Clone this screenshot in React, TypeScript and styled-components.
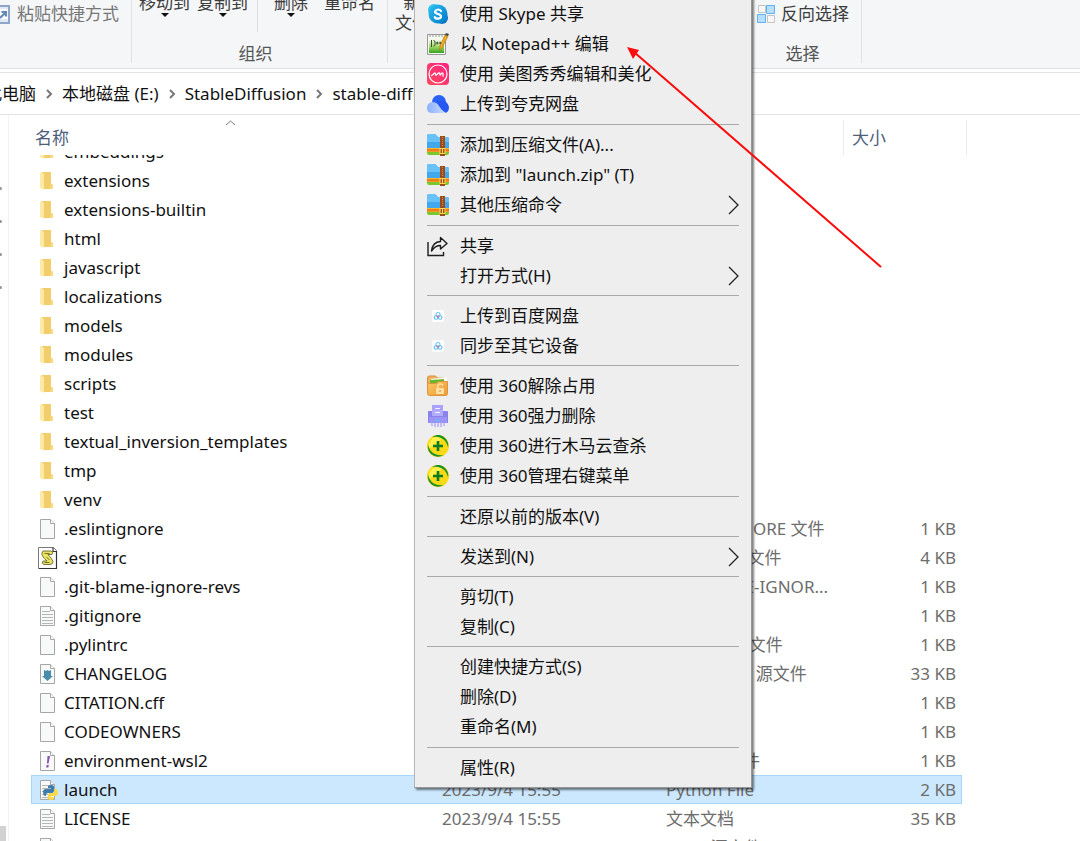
import React from "react";
import styled, { createGlobalStyle, css } from "styled-components";

const GlobalStyle = createGlobalStyle`
  * { box-sizing: border-box; }
  body {
    margin: 0;
    background: #fff;
    color: #111;
    font-family: "Noto Sans", "Noto Sans CJK SC", sans-serif;
    font-size: 17px;
    line-height: 20px;
  }
  button {
    margin: 0;
    padding: 0;
    border: 0;
    background: none;
    color: inherit;
    font: inherit;
    white-space: nowrap;
  }
`;

const Window = styled.div`
  position: relative;
  display: flex;
  flex-direction: column;
  height: 100vh;
  overflow: hidden;
`;

/* ---------- ribbon ---------- */

const Ribbon = styled.header`
  display: flex;
  flex: none;
  height: 69px;
  overflow: hidden;
  background: #f4f6f8;
  border-bottom: 1px solid #dfe1e3;
`;

const RibbonGroup = styled.section<{ $width?: number }>`
  display: flex;
  flex-direction: column;
  flex: none;
  height: 63px;
  ${(p) => p.$width && css`width: ${p.$width}px;`}
  border-right: 1px solid #e0e2e4;
  color: #3c3c3c;
`;

const Commands = styled.div<{ $tall?: boolean }>`
  display: flex;
  flex: none;
  align-items: flex-start;
  height: ${(p) => (p.$tall ? 51 : 40)}px;
  margin-top: ${(p) => (p.$tall ? -7 : 4)}px;
`;

const GroupLabel = styled.div`
  padding-right: 8px;
  text-align: center;
  color: #555;
`;

const TallButton = styled.button`
  display: flex;
  flex-direction: column;
  align-items: center;
  margin-left: 7px;
`;

const WideGapButton = styled(TallButton)`
  margin-left: 16px;
`;

const CommandDivider = styled.span`
  width: 1px;
  height: 39px;
  margin-left: 9px;
  background: #dcdee0;
`;

const RowButton = styled.button`
  display: flex;
  align-items: center;
  gap: 6px;
  height: 20px;
  padding: 0 12px 0 5px;
  &:disabled { color: #777; padding: 0; margin-left: -7px; }
`;

const Caret = () => (
  <svg width="8" height="4" viewBox="0 0 8 4" aria-hidden="true">
    <path d="M0 0h8L4 4z" fill="#111" />
  </svg>
);

/* ---------- address bar ---------- */

const AddressBar = styled.nav`
  display: flex;
  align-items: center;
  flex: none;
  height: 43px;
  margin-top: 3px;
  border-top: 1px solid #e3e3e3;
  border-bottom: 1px solid #e3e3e3;
  overflow: hidden;
`;

const Crumb = styled.button`
  flex: none;
  &:first-child { margin-left: -15px; }
`;

const CrumbArrow = styled.svg`
  flex: none;
  width: 26px;
  height: 12px;
`;

/* ---------- body ---------- */

const Body = styled.div`
  display: flex;
  flex: 1;
  min-height: 0;
`;

const NavPane = styled.aside`
  display: flex;
  flex-direction: column;
  flex: none;
  width: 9px;
  margin-right: 22px;
  padding-top: 72px;
  border-right: 1px solid #f3f3f3;
`;

const PinMark = styled.i`
  width: 2px;
  height: 3px;
  margin-bottom: 30px;
  border-radius: 0 2px 2px 0;
  background: #8f98a3;
`;

const ScrollThumb = styled.div`
  width: 6px;
  height: 15px;
  margin-top: auto;
  background: #d2d2d2;
`;

const FileTable = styled.table`
  flex: none;
  width: 936px;
  height: min-content;
  table-layout: fixed;
  border-collapse: separate;
  border-spacing: 0;
`;

const HeadCell = styled.th`
  position: relative;
  height: 40px;
  padding: 6px 0 0 4px;
  text-align: left;
  font-weight: 400;
  color: #4d607a;
  background: linear-gradient(#ebebeb, #ebebeb) right bottom / 1px 35px no-repeat;
`;

const NameHead = styled(HeadCell)`
  background: none;
`;

const SizeHead = styled(HeadCell)`
  padding-left: 8px;
  background: none;
`;

const SortMark = styled.svg`
  position: absolute;
  top: 5px;
  left: 194px;
`;

const Row = styled.tr<{ $selected?: boolean }>`
  td {
    height: 29px;
    padding: 0 0 0 7px;
    white-space: nowrap;
    color: #6d6d6d;
    ${(p) =>
      p.$selected &&
      css`
        background: #cce8ff;
        border: solid #a6d6fb;
        border-width: 1px 0;
      `}
  }
  td:first-child {
    color: #111;
    ${(p) => p.$selected && css`border-left-width: 1px;`}
    padding-left: ${(p) => (p.$selected ? 6 : 7)}px;
  }
  td:last-child {
    padding-right: ${(p) => (p.$selected ? 5 : 6)}px;
    text-align: right;
    ${(p) => p.$selected && css`border-right-width: 1px;`}
  }
`;

const CutRow = styled(Row)`
  td { height: 11px; vertical-align: bottom; }
`;

const NameBox = styled.div<{ $cut?: boolean }>`
  display: flex;
  align-items: ${(p) => (p.$cut ? "flex-end" : "center")};
  gap: 6px;
  ${(p) => p.$cut && css`height: 11px; padding-bottom: 4px; overflow: hidden;`}
  svg { flex: none; }
`;

/* ---------- file icons (20 x 24) ---------- */

type IconKind = "folder" | "blank" | "text" | "script" | "markdown" | "yaml" | "python";

const Page = ({ lined }: { lined?: boolean }) => (
  <>
    <path d="M2.500 2.500h10l4 4v15h-14z" fill="#f8f9f9" stroke="#a6a6a6" />
    <path d="M12.500 2.500v4h4" fill="#fff" stroke="#a6a6a6" />
    {lined && <path d="M4 7.500h8M4 10.500h11M4 13.500h11M4 16.500h11M4 19.500h11" stroke="#b5b5b5" />}
  </>
);

const FileIcon = ({ kind }: { kind: IconKind }) => (
  <svg width="20" height="24" viewBox="0 0 20 24" aria-hidden="true">
    {kind === "folder" && (
      <>
        <path d="M4 3h9v12l2 1v4H5z" fill="#f2cd6b" />
        <path d="M13 15h1l1 1v4h-3z" fill="#f8d97f" />
        <path d="M2 3l4 2v16l-4-2z" fill="#ffe9a6" />
      </>
    )}
    {kind === "blank" && <Page />}
    {kind === "text" && <Page lined />}
    {kind === "script" && (
      <>
        <path d="M.500 1.500h15l3 3v18H.500z" fill="#fff" stroke="#7a7a7a" />
        <path d="M15 1.500v4h4M18.500 5v17.500H1" fill="none" stroke="#333" strokeWidth="1.200" />
        <path d="M5 5h8q3 1 1 3.500h-4q4 4 5 7 0 3-3 3H6q-3-1-1-3.500h4Q3 10 4 7z" fill="#ebe45e" stroke="#55552a" strokeWidth=".8" />
        <path d="M6.500 7.500h5M8.500 11l3 3M6.500 16.500h5" stroke="#55552a" strokeWidth=".8" />
      </>
    )}
    {kind === "markdown" && (
      <>
        <Page />
        <path d="M6 8l2 1 1.500-1L11 9l2-1v6h2l-5.500 5L4 14h2z" fill="#4a8cab" />
      </>
    )}
    {kind === "yaml" && (
      <>
        <Page />
        <path d="M9.500 7h2.500l-1.500 7.500H9zM8.600 16h2.200l-.4 2.400H8.200z" fill="#8a4fb0" />
      </>
    )}
    {kind === "python" && (
      <>
        <Page lined />
        <path d="M10 8q3-2 6 0v5q0 2-2 2h-4q-2 0-2 2v1H7q-2-1-2-4 0-3 3-3h5v-1h-3z" fill="#3b7dae" />
        <path d="M16 11h2q2 1 2 4t-3 3h-4v1h3v2q-3 2-6 0v-4q0-2 2-2h3q1 0 1-2z" fill="#fdd849" />
      </>
    )}
  </svg>
);

interface FileEntry {
  name: string;
  kind: IconKind;
  type?: string;
  size?: string;
}

const DATE = "2023/9/4 15:55";

const folders = [
  "embeddings", "extensions", "extensions-builtin", "html", "javascript", "localizations", "models",
  "modules", "scripts", "test", "textual_inversion_templates", "tmp", "venv",
];

const files: FileEntry[] = [
  ...folders.map((name): FileEntry => ({ name, kind: "folder", type: "文件夹" })),
  { name: ".eslintignore", kind: "blank", type: "ESLINTIGNORE 文件", size: "1 KB" },
  { name: ".eslintrc", kind: "script", type: "ESLINTRC 文件", size: "4 KB" },
  { name: ".git-blame-ignore-revs", kind: "blank", type: "GIT-BLAME-IGNOR...", size: "1 KB" },
  { name: ".gitignore", kind: "text", type: "文本文档", size: "1 KB" },
  { name: ".pylintrc", kind: "blank", type: "PYLINTRC 文件", size: "1 KB" },
  { name: "CHANGELOG", kind: "markdown", type: "Markdown 源文件", size: "33 KB" },
  { name: "CITATION.cff", kind: "blank", type: "CFF 文件", size: "1 KB" },
  { name: "CODEOWNERS", kind: "blank", type: "文件", size: "1 KB" },
  { name: "environment-wsl2", kind: "yaml", type: "Yaml 源文件", size: "1 KB" },
  { name: "launch", kind: "python", type: "Python File", size: "2 KB" },
  { name: "LICENSE", kind: "text", type: "文本文档", size: "35 KB" },
  { name: "package", kind: "blank", type: "JSON 源文件", size: "1 KB" },
];

/* ---------- context menu ---------- */

const Menu = styled.div`
  position: absolute;
  top: -7px;
  left: 414px;
  width: 338px;
  padding: 0 12px;
  background: #eee;
  border: 1px solid #b4b4b4;
  border-right-color: #979797;
  border-bottom-color: #979797;
  box-shadow: 2px 2px 2px rgba(0, 0, 0, 0.5);
`;

const MenuGroup = styled.div<{ $long: boolean }>`
  padding: 5px 0 ${(p) => (p.$long ? 5 : 4)}px;
  & + & { border-top: 1px solid #a8a8a8; }
`;

const MenuItem = styled.button`
  display: flex;
  align-items: center;
  width: 100%;
  height: 30px;
  text-align: left;
`;

const MenuIcon = styled.span`
  display: flex;
  flex: none;
  width: 22px;
  margin-right: 11px;
`;

const MenuText = styled.span`
  flex: 1;
`;

const Glyph = ({ children }: { children: React.ReactNode }) => (
  <svg width="22" height="22" viewBox="0 0 22 22" aria-hidden="true">{children}</svg>
);

const SkypeIcon = () => (
  <Glyph>
    <defs>
      <linearGradient id="sky" x1="0" y1="0" x2="1" y2="1">
        <stop offset="0" stopColor="#2cc0f2" />
        <stop offset="1" stopColor="#0078c8" />
      </linearGradient>
    </defs>
    <circle cx="7" cy="7" r="6" fill="#2fc1f0" />
    <circle cx="15" cy="15" r="6" fill="#0a78c4" />
    <circle cx="11" cy="11" r="9.500" fill="url(#sky)" />
    <path d="M14 8Q13 6.500 11 6.500T8 8.500Q8 10.300 11 11t3 2.600q0 2-3 2T7.800 14" fill="none" stroke="#fff" strokeWidth="2.200" strokeLinecap="round" />
  </Glyph>
);

const NotepadIcon = () => (
  <Glyph>
    <defs>
      <linearGradient id="npp" x1="0" y1="0" x2="0" y2="1">
        <stop offset="0.200" stopColor="#f4faee" />
        <stop offset="0.600" stopColor="#a6d96a" />
        <stop offset="1" stopColor="#35a51e" />
      </linearGradient>
    </defs>
    <path d="M.500 1.500h18v20H.500z" fill="#f6f6f6" stroke="#999" />
    <path d="M2 3h15v17H2z" fill="url(#npp)" />
    <path d="M3 2v2M6 2v2M9 2v2M12 2v2M15 2v2" stroke="#999" />
    <path d="M4.500 14V7M6.500 7.500q1.500 0 1.500 1.500v3q0 1-1.500 1M9 10h2.500M10.300 8.800v2.500M12 10h2.500M13.300 8.800v2.500" fill="none" stroke="#3b4a35" />
    <path d="M18 2l3 1-6 12-2.500 2 .500-4z" fill="#f2a91d" stroke="#b07a1c" strokeWidth=".7" />
    <path d="M18 2l1-2 3 1-1 2z" fill="#444" />
  </Glyph>
);

const MeituIcon = () => (
  <Glyph>
    <defs>
      <linearGradient id="mt" x1="1" y1="0" x2="0" y2="1">
        <stop offset="0" stopColor="#ff2184" />
        <stop offset="1" stopColor="#ff4a5c" />
      </linearGradient>
    </defs>
    <rect width="22" height="22" rx="4" fill="url(#mt)" />
    <circle cx="11" cy="11" r="9" fill="none" stroke="#fff" strokeWidth="1.200" />
    <path d="M4.500 12.500Q6 12 7 10.500t1.800 1.200Q9 13 10 11.500t2-1.500q1 0 1 1.700 0 .8 1-.7 1-1.500 1.700-.7T16 13" fill="none" stroke="#fff" strokeWidth="1.300" strokeLinecap="round" />
  </Glyph>
);

const QuarkIcon = () => (
  <Glyph>
    <defs>
      <linearGradient id="qk" x1="0" y1="0" x2="1" y2="0">
        <stop offset="0" stopColor="#8bb0ff" />
        <stop offset="1" stopColor="#cbdcff" />
      </linearGradient>
    </defs>
    <circle cx="12" cy="9" r="7" fill="#2a62f5" />
    <path d="M10 8q10-2 12 6 0 6-5 6h-6z" fill="#2657f2" />
    <path d="M0 15q0-5 5-6 5 0 7 4 2 4 7 7H5q-5 0-5-5z" fill="url(#qk)" />
  </Glyph>
);

const ZipIcon = () => (
  <Glyph>
    <path d="M0 15h22v4q0 2-2 2H2q-2 0-2-2z" fill="#7cc62e" />
    <path d="M0 13h22v5H0z" fill="#f9b72d" />
    <path d="M0 15h22v2.500H0z" fill="#f07d1c" />
    <path d="M0 2q0-2 2-2h6l3 3h9q2 0 2 2v9H0z" fill="#42a8ee" />
    <path d="M0 2q0-2 2-2h6l3 3h9q2 0 2 2v3H0z" fill="#68c2f8" />
    <path d="M13 2h5v20h-5z" fill="#9b4c1c" />
    <path d="M15.500 3v10" stroke="#d98e4b" strokeDasharray="1 1" />
    <rect x="13" y="14.500" width="5" height="5" fill="#a7521c" stroke="#ffd75a" />
    <path d="M15.500 15v4" stroke="#ffd75a" />
  </Glyph>
);

const ShareIcon = () => (
  <Glyph>
    <path d="M1 7v13.500h15.500V17" fill="none" stroke="#1d1d1d" strokeWidth="1.400" />
    <path d="M13.500 2.500l6.500 6-6.500 5.500v-3.500Q8 10.500 4.500 16 5.500 7 13.500 6.500z" fill="none" stroke="#1d1d1d" strokeWidth="1.400" strokeLinejoin="round" />
  </Glyph>
);

const BaiduIcon = () => (
  <Glyph>
    <rect x="5" y="5" width="12" height="12" rx="2" fill="#fdfdfd" />
    <circle cx="11" cy="9.500" r="2" fill="none" stroke="#6cc6f5" strokeWidth="1.100" />
    <circle cx="9" cy="12.500" r="1.800" fill="none" stroke="#62bbf7" strokeWidth="1.100" />
    <circle cx="13.200" cy="12.500" r="1.800" fill="none" stroke="#62bbf7" strokeWidth="1.100" />
    <circle cx="11" cy="11.500" r="1.100" fill="#ee6575" />
  </Glyph>
);

const UnlockIcon = () => (
  <Glyph>
    <defs>
      <linearGradient id="ul" x1="0" y1="0" x2="1" y2="1">
        <stop offset="0" stopColor="#fcc763" />
        <stop offset="1" stopColor="#ee9b33" />
      </linearGradient>
    </defs>
    <path d="M.500 3q0-2 2-2h6l2 2h9v8H.500z" fill="#f2b25a" stroke="#cf8d3e" />
    <path d="M4 4l16-2v7H4z" fill="#fff" />
    <path d="M3 5l14-1v4H3z" fill="#66b82e" />
    <path d="M.500 8.500h9l2-2h9v12q0 2-2 2h-16q-2 0-2-2z" fill="url(#ul)" stroke="#dd9440" />
    <rect x="9" y="13" width="8" height="6" rx="1" fill="#fddfa8" />
    <path d="M11 13v-2q0-2 2.500-2 2 0 2 1.500" fill="none" stroke="#fddfa8" strokeWidth="1.500" />
    <path d="M13 15v2" stroke="#e9a04a" strokeWidth="1.500" />
  </Glyph>
);

const ShredIcon = () => (
  <Glyph>
    <path d="M5 0h11v9H5z" fill="#aaa2fb" />
    <path d="M1 6h4v3h11V6h4q1 0 1 1v11H1z" fill="#8c82ee" />
    <path d="M5 5h11v6H5z" fill="#b3acfc" />
    <path d="M8 3.500h5M8 7.500h5" stroke="#f3f1ff" strokeWidth="1.200" />
    <path d="M2 12h18v6H2z" fill="#9c93f6" />
    <path d="M8.500 15.500h4" stroke="#58c6f3" strokeWidth="1.500" />
    <path d="M5 18v3M8 18v4M11 18v4M14 18v4M17 18v3" stroke="#b3acf8" strokeWidth="1.500" />
  </Glyph>
);

const Shield360Icon = () => (
  <Glyph>
    <circle cx="11" cy="11" r="11" fill="#fbd915" />
    <path d="M2 14q-1-7 4-11 5-3 10 0" fill="#fff04a" />
    <path d="M5 2Q13-3 19 4q3 4 2 8-2-7-7-9-4-2-9-1z" fill="#17922b" />
    <path d="M17 20q-7 4-13-1-4-4-3-9 2 7 7 9 4 2 9 1z" fill="#17922b" />
    <path d="M11 6v10M6 11h10" stroke="#0a7d22" strokeWidth="2.600" />
  </Glyph>
);

const SubmenuArrow = () => (
  <svg width="11" height="20" viewBox="0 0 11 20" aria-hidden="true">
    <path d="M1 1l9 9-9 9" fill="none" stroke="#222" strokeWidth="1.300" />
  </svg>
);

interface Entry {
  label: string;
  icon?: React.ReactNode;
  submenu?: boolean;
}

const menu: Entry[][] = [
  [
    { label: "使用 Skype 共享", icon: <SkypeIcon /> },
    { label: "以 Notepad++ 编辑", icon: <NotepadIcon /> },
    { label: "使用 美图秀秀编辑和美化", icon: <MeituIcon /> },
    { label: "上传到夸克网盘", icon: <QuarkIcon /> },
  ],
  [
    { label: "添加到压缩文件(A)...", icon: <ZipIcon /> },
    { label: '添加到 "launch.zip" (T)', icon: <ZipIcon /> },
    { label: "其他压缩命令", icon: <ZipIcon />, submenu: true },
  ],
  [
    { label: "共享", icon: <ShareIcon /> },
    { label: "打开方式(H)", submenu: true },
  ],
  [
    { label: "上传到百度网盘", icon: <BaiduIcon /> },
    { label: "同步至其它设备", icon: <BaiduIcon /> },
  ],
  [
    { label: "使用 360解除占用", icon: <UnlockIcon /> },
    { label: "使用 360强力删除", icon: <ShredIcon /> },
    { label: "使用 360进行木马云查杀", icon: <Shield360Icon /> },
    { label: "使用 360管理右键菜单", icon: <Shield360Icon /> },
  ],
  [{ label: "还原以前的版本(V)" }],
  [{ label: "发送到(N)", submenu: true }],
  [{ label: "剪切(T)" }, { label: "复制(C)" }],
  [{ label: "创建快捷方式(S)" }, { label: "删除(D)" }, { label: "重命名(M)" }],
  [{ label: "属性(R)" }],
];

/* Red pointer drawn over the window */
const Pointer = styled.svg`
  position: absolute;
  top: 40px;
  left: 620px;
  pointer-events: none;
`;

const crumbs = ["此电脑", "本地磁盘 (E:)", "StableDiffusion", "stable-diffusion-webui"];

export default function App() {
  return (
    <Window>
      <GlobalStyle />
      <Ribbon>
        <RibbonGroup $width={132}>
          <Commands>
            <RowButton disabled>
              <svg width="18" height="20" viewBox="0 0 18 20" aria-hidden="true">
                <path d="M1 2h15v17H1z" fill="#dfe9f5" stroke="#8ea7c8" strokeWidth="2" />
                <path d="M6 5h9v10H6z" fill="#fff" />
                <path d="M7 14l5-5M8.500 8H13v4.500" fill="none" stroke="#6688b4" strokeWidth="2.200" />
              </svg>
              粘贴快捷方式
            </RowButton>
          </Commands>
        </RibbonGroup>
        <RibbonGroup $width={256}>
          <Commands $tall>
            <TallButton>移动到<Caret /></TallButton>
            <TallButton>复制到<Caret /></TallButton>
            <CommandDivider />
            <WideGapButton>删除<Caret /></WideGapButton>
            <WideGapButton>重命名</WideGapButton>
          </Commands>
          <GroupLabel>组织</GroupLabel>
        </RibbonGroup>
        <RibbonGroup $width={364}>
          <Commands $tall>
            <TallButton><span>新建</span><span>文件夹</span></TallButton>
          </Commands>
        </RibbonGroup>
        <RibbonGroup>
          <Commands>
            <RowButton>
              <svg width="18" height="18" viewBox="0 0 18 18" aria-hidden="true">
                <path d="M1.500.500h7v7h-7zM10.500 10.500h7v7h-7z" fill="#f7f7f7" stroke="#c4c4c4" />
                <path d="M9.500.500h8v8h-8zM.500 9.500h8v8h-8z" fill="#b5dffd" stroke="#61b1ee" />
              </svg>
              反向选择
            </RowButton>
          </Commands>
          <GroupLabel>选择</GroupLabel>
        </RibbonGroup>
      </Ribbon>

      <AddressBar>
        {crumbs.map((crumb, i) => (
          <React.Fragment key={crumb}>
            {i > 0 && (
              <CrumbArrow viewBox="0 0 26 12" aria-hidden="true">
                <path d="M11 2l4 4-4 4" fill="none" stroke="#777" strokeWidth="2" />
              </CrumbArrow>
            )}
            <Crumb>{crumb}</Crumb>
          </React.Fragment>
        ))}
      </AddressBar>

      <Body>
        <NavPane>
          <PinMark /><PinMark /><PinMark /><PinMark />
          <ScrollThumb />
        </NavPane>
        <FileTable>
          <colgroup>
            <col width="404" />
            <col width="224" />
            <col width="185" />
            <col width="118" />
            <col width="5" />
          </colgroup>
          <thead>
            <tr>
              <NameHead>
                名称
                <SortMark width="11" height="6" viewBox="0 0 11 6" aria-hidden="true">
                  <path d="M1 5l4.500-4L10 5" fill="none" stroke="#777" />
                </SortMark>
              </NameHead>
              <HeadCell>修改日期</HeadCell>
              <HeadCell>类型</HeadCell>
              <SizeHead>大小</SizeHead>
              <HeadCell aria-hidden="true" />
            </tr>
          </thead>
          <tbody>
            {files.map((file, i) => {
              const cut = i === 0;
              const RowKind = cut ? CutRow : Row;
              return (
                <RowKind key={file.name} $selected={file.name === "launch"}>
                  <td>
                    <NameBox $cut={cut}>
                      <FileIcon kind={file.kind} />
                      {file.name}
                    </NameBox>
                  </td>
                  <td>{cut ? null : DATE}</td>
                  <td>{cut ? null : file.type}</td>
                  <td>{file.size}</td>
                </RowKind>
              );
            })}
          </tbody>
        </FileTable>
      </Body>

      <Menu role="menu">
        {menu.map((group) => (
          <MenuGroup key={group[0].label} $long={group.length > 2}>
            {group.map((entry) => (
              <MenuItem key={entry.label} role="menuitem">
                <MenuIcon>{entry.icon}</MenuIcon>
                <MenuText>{entry.label}</MenuText>
                {entry.submenu && <SubmenuArrow />}
              </MenuItem>
            ))}
          </MenuGroup>
        ))}
      </Menu>

      <Pointer width="264" height="230" viewBox="0 0 264 230" aria-hidden="true">
        <path d="M14 12L261 227" stroke="#fb0d0d" strokeWidth="2" />
        <path d="M7 7l12 3-6 9z" fill="#fb0d0d" />
      </Pointer>
    </Window>
  );
}
